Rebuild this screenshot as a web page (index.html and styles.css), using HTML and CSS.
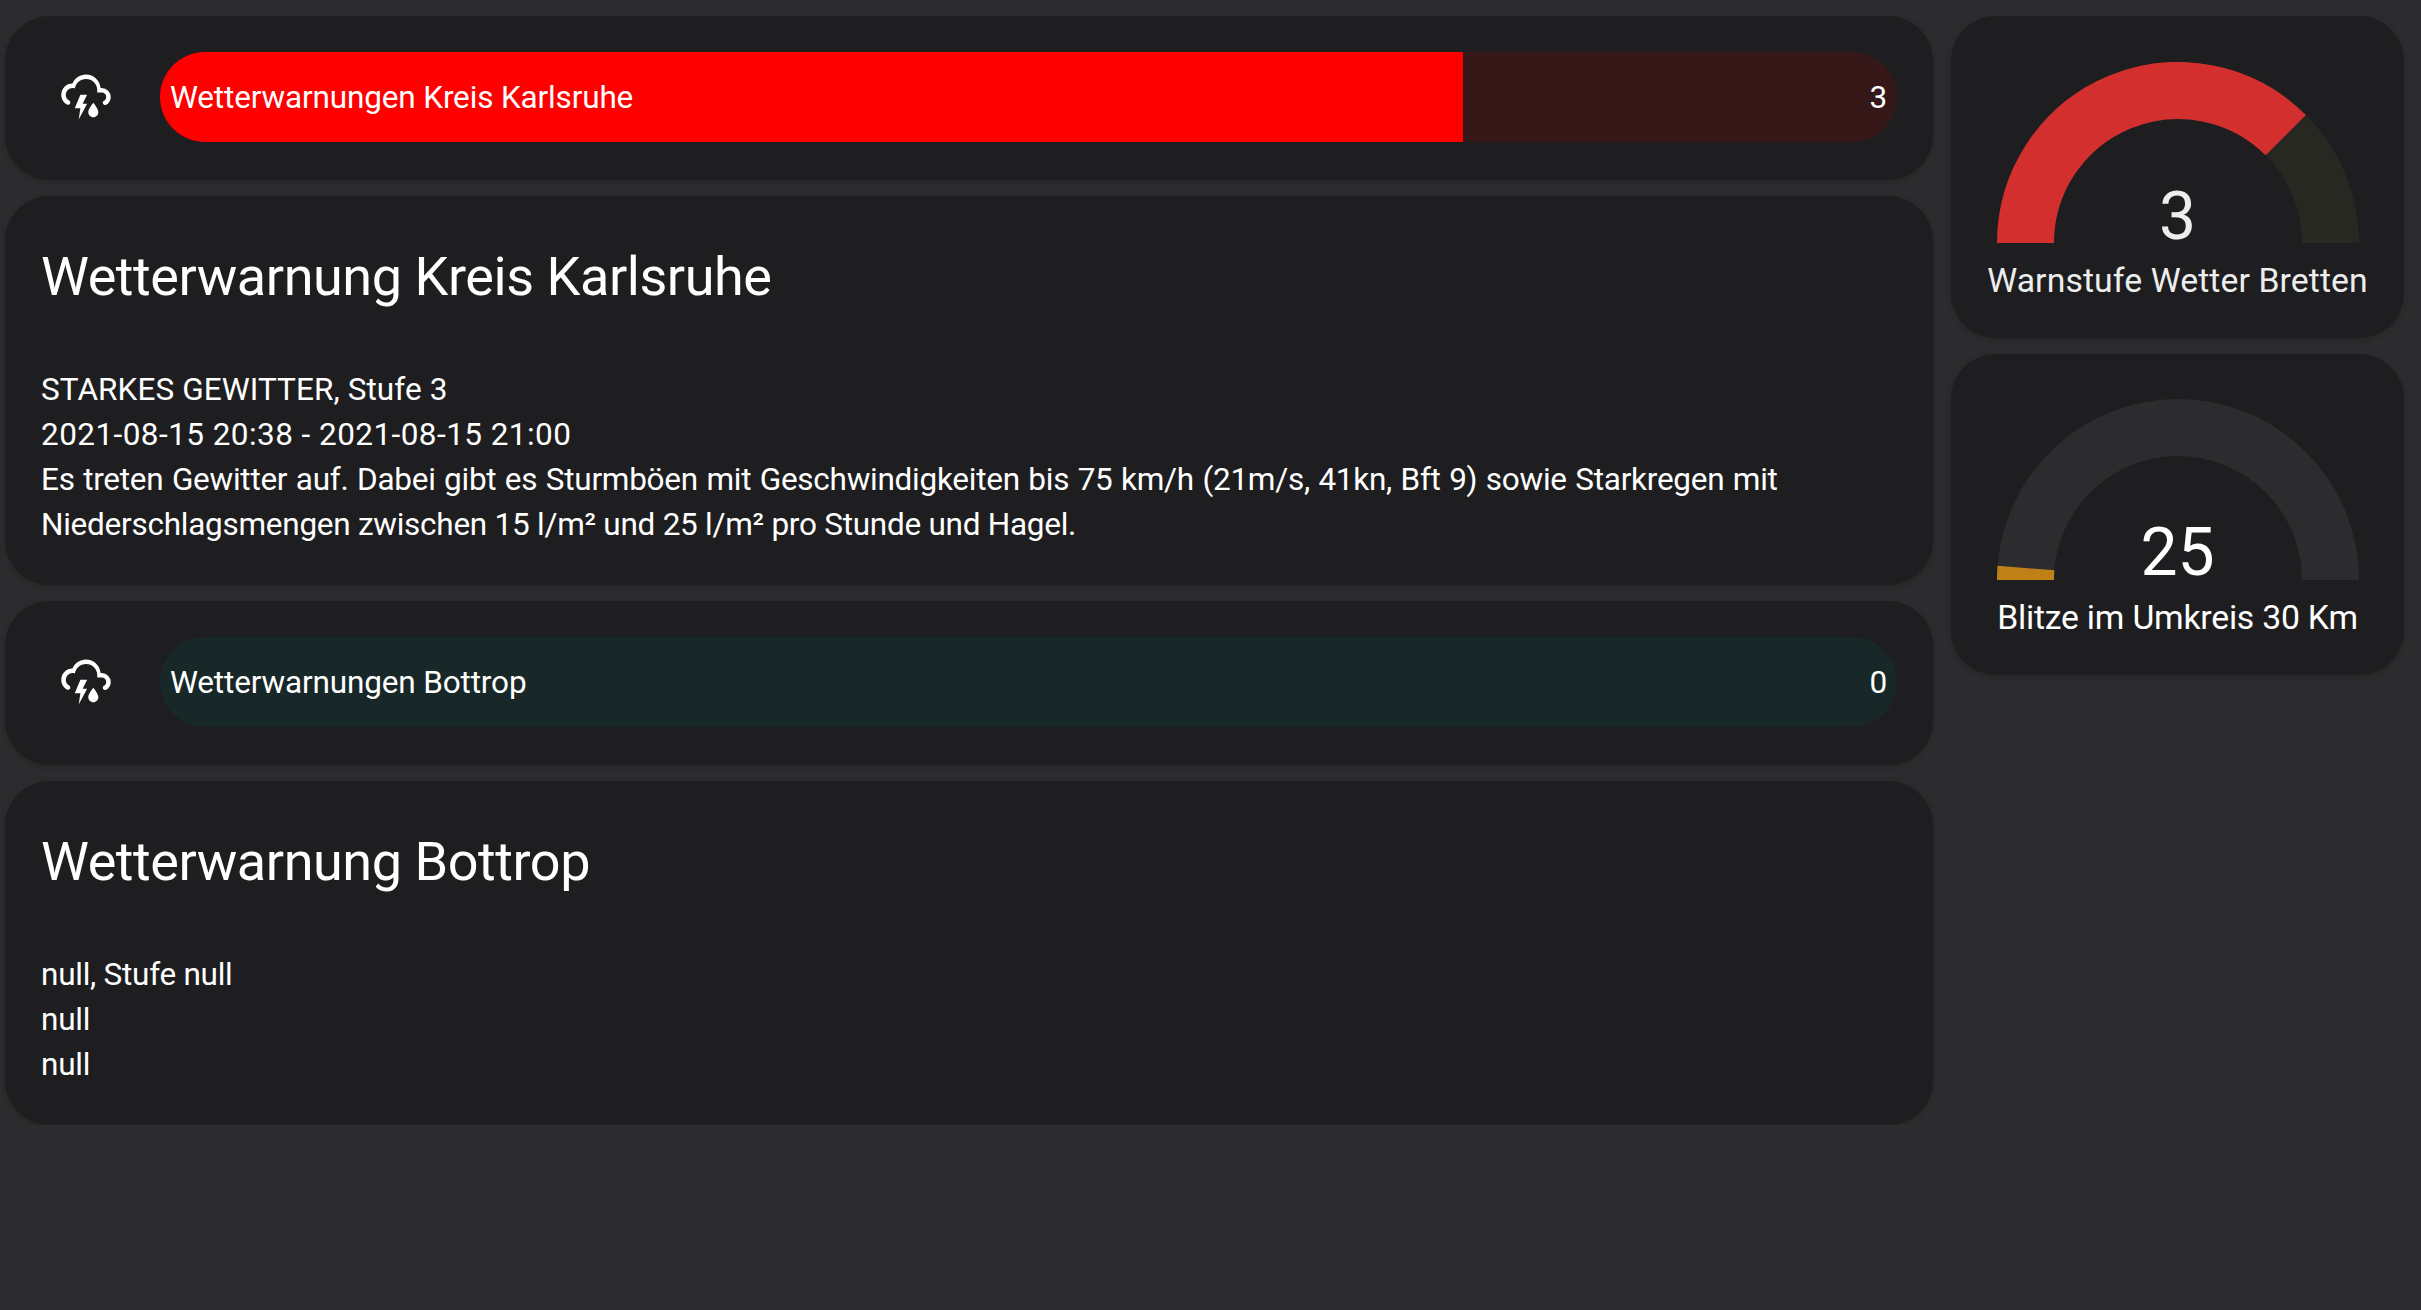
FILE: index.html
```
<!DOCTYPE html>
<html lang="de">

<head>
    <meta charset="UTF-8">
    <meta name="viewport" content="width=device-width, initial-scale=1.0">
    <title>Wetterwarnungen</title>
    <link rel="stylesheet" href="styles.css">
</head>

<body>
    <svg class="sprite">
        <symbol id="weather-lightning-rainy" viewBox="0 0 24 24">
            <path d="M4.5,13.59C5,13.87 5.14,14.5 4.87,14.96C4.59,15.44 4,15.6 3.5,15.33V15.33C2,14.47 1,12.85 1,11A5,5 0 0,1 6,6C7,3.65 9.3,2 12,2C15.43,2 18.24,4.66 18.5,8.03L19,8A4,4 0 0,1 23,12C23,13.5 22.2,14.77 21,15.46V15.46C20.5,15.73 19.91,15.57 19.63,15.09C19.36,14.61 19.5,14 20,13.72V13.72C20.6,13.39 21,12.74 21,12A2,2 0 0,0 19,10H17V9A5,5 0 0,0 12,4C9.5,4 7.45,5.82 7.06,8.19C6.73,8.07 6.37,8 6,8A3,3 0 0,0 3,11C3,12.11 3.6,13.08 4.5,13.6V13.59M9.5,11H12.5L10.5,15H12.5L8.75,22L9.5,17H7L9.5,11M17.5,18.67C17.5,19.96 16.5,21 15.25,21C14,21 13,19.96 13,18.67C13,17.12 15.25,14.5 15.25,14.5C15.25,14.5 17.5,17.12 17.5,18.67Z"/>
        </symbol>
    </svg>

    <div class="dashboard">
        <div class="column column-main">
            <div class="card bar-card">
                <svg class="bar-icon"><use href="#weather-lightning-rainy"/></svg>
                <div class="bar bar-red">
                    <div class="bar-fill" style="width: 75%"></div>
                    <div class="bar-content">
                        <span>Wetterwarnungen Kreis Karlsruhe</span>
                        <span>3</span>
                    </div>
                </div>
            </div>

            <div class="card text-card">
                <h1>Wetterwarnung Kreis Karlsruhe</h1>
                <div class="warning">
                    <div class="warning-event">STARKES GEWITTER, Stufe 3</div>
                    <div class="warning-time">2021-08-15 20:38 - 2021-08-15 21:00</div>
                    <div class="warning-text">Es treten Gewitter auf. Dabei gibt es Sturmböen mit Geschwindigkeiten bis 75 km/h (21m/s, 41kn, Bft 9) sowie Starkregen mit Niederschlagsmengen zwischen 15 l/m² und 25 l/m² pro Stunde und Hagel.</div>
                </div>
            </div>

            <div class="card bar-card">
                <svg class="bar-icon"><use href="#weather-lightning-rainy"/></svg>
                <div class="bar bar-green">
                    <div class="bar-fill" style="width: 0%"></div>
                    <div class="bar-content">
                        <span>Wetterwarnungen Bottrop</span>
                        <span>0</span>
                    </div>
                </div>
            </div>

            <div class="card text-card">
                <h1>Wetterwarnung Bottrop</h1>
                <div class="warning warning-empty">
                    <div>null, Stufe null</div>
                    <div>null</div>
                    <div>null</div>
                </div>
            </div>
        </div>

        <div class="column column-side">
            <div class="card gauge-card gauge-level">
                <div class="gauge">
                    <svg class="dial" viewBox="0 0 362 181">
                        <path class="dial-track" d="M28.5,181A152.5,152.5 0 0,1 333.5,181"/>
                        <path class="dial-value" d="M28.5,181A152.5,152.5 0 0,1 288.83,73.17"/>
                    </svg>
                    <div class="gauge-value">3</div>
                </div>
                <div class="gauge-name">Warnstufe Wetter Bretten</div>
            </div>

            <div class="card gauge-card gauge-lightning">
                <div class="gauge">
                    <svg class="dial" viewBox="0 0 362 181">
                        <path class="dial-track" d="M28.5,181A152.5,152.5 0 0,1 333.5,181"/>
                        <path class="dial-value" d="M28.5,181A152.5,152.5 0 0,1 28.97,169.03"/>
                    </svg>
                    <div class="gauge-value">25</div>
                </div>
                <div class="gauge-name">Blitze im Umkreis 30 Km</div>
            </div>
        </div>
    </div>
</body>

</html>
```

FILE: styles.css
```
body {
    font-family: Roboto, "Liberation Sans", sans-serif;
    font-size: 31.5px;
    line-height: 45px;
    margin: 0;
    color: #fff;
    background-color: #2c2c2e;
}

.sprite {
    display: none;
}

.dashboard {
    display: grid;
    grid-template-columns: 1928px 453px;
    column-gap: 18px;
    align-items: start;
    padding: 16px 0 0 5px;
}

.column {
    display: flex;
    flex-direction: column;
    gap: 16px;
}

.card {
    box-sizing: border-box;
    border-radius: 45px;
    background-color: #1e1e20;
    box-shadow: 0 2px 4px rgba(0, 0, 0, 0.1), 0 1px 8px rgba(0, 0, 0, 0.06);
}

/* bar cards */
.bar-card {
    display: flex;
    align-items: center;
    height: 164px;
    padding: 36px 36px 38px 54px;
}

.bar-icon {
    width: 54px;
    height: 54px;
    margin-right: 47px;
    fill: #fff;
}

.bar {
    display: grid;
    flex: 1;
    height: 90px;
    border-radius: 45px;
    overflow: hidden;
}

.bar-fill,
.bar-content {
    grid-area: 1 / 1;
}

.bar-content {
    display: flex;
    justify-content: space-between;
    align-items: center;
    padding: 0 10px;
    letter-spacing: -0.15px;
}

.bar-red {
    background-color: #371819;
}

.bar-red .bar-fill {
    background-color: #f00;
}

.bar-green {
    background-color: #182727;
}

.bar-green .bar-fill {
    background-color: #009688;
}

/* text cards */
.text-card {
    padding: 45px 36px 38px;
}

.text-card h1 {
    margin: 0;
    font-size: 54px;
    font-weight: normal;
    line-height: 72px;
    letter-spacing: -0.45px;
}

.warning {
    margin-top: 54px;
}

.warning-event {
    letter-spacing: 0.09px;
}

.warning-time {
    letter-spacing: 0.44px;
}

.warning-text {
    letter-spacing: -0.26px;
}

.warning-text::first-line {
    word-spacing: 0.95px;
}

.warning-empty {
    letter-spacing: -0.26px;
}

/* gauges */
.gauge-card {
    display: flex;
    flex-direction: column;
    align-items: center;
    height: 322px;
    padding-top: 45px;
}

.gauge {
    display: grid;
    justify-items: center;
    align-items: end;
}

.dial,
.gauge-value {
    grid-area: 1 / 1;
}

.dial {
    width: 362px;
    height: 181px;
}

.dial path {
    fill: none;
    stroke-width: 57;
}

.gauge-value {
    font-size: 66px;
    line-height: 54px;
}

.gauge-name {
    margin-top: 15px;
    font-size: 33.75px;
}

.gauge-level {
    padding-top: 46px;
    color: #ededed;
}

.gauge-level .gauge-value {
    line-height: 52px;
}

.gauge-level .gauge-name {
    letter-spacing: 0.1px;
}

.gauge-level .dial-track {
    stroke: #282822;
}

.gauge-level .dial-value {
    stroke: #d32f2f;
}

.gauge-lightning {
    height: 321px;
}

.gauge-lightning .gauge-name {
    letter-spacing: -0.22px;
}

.gauge-lightning .dial-track {
    stroke: #2c2c2e;
}

.gauge-lightning .dial-value {
    stroke: #c08018;
}
```
